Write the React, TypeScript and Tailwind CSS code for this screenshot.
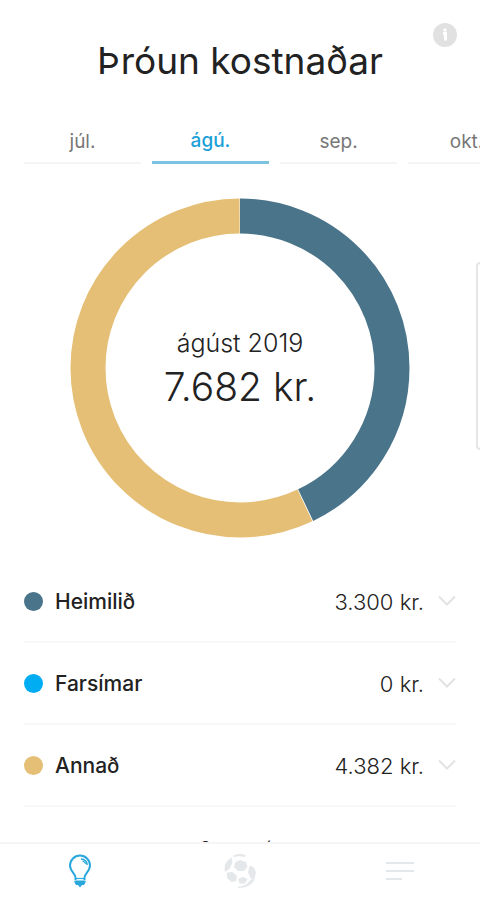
import React, { useState } from 'react';
import { clsx } from 'clsx';

interface Category {
  name: string;
  amount: number;
  dot: string;
  stroke: string;
}

const months = ['júl.', 'ágú.', 'sep.', 'okt.'];

const categories: Category[] = [
  { name: 'Heimilið', amount: 3300, dot: 'bg-[#4a748a]', stroke: '#4a748a' },
  { name: 'Farsímar', amount: 0, dot: 'bg-[#00adf2]', stroke: '#00adf2' },
  { name: 'Annað', amount: 4382, dot: 'bg-[#e5bf75]', stroke: '#e5bf75' },
];

const total = categories.reduce((sum, c) => sum + c.amount, 0);

const formatAmount = (amount: number) =>
  `${String(amount).replace(/\B(?=(\d{3})+(?!\d))/g, '.')} kr.`;

function MonthTabs() {
  const [active, setActive] = useState(1);

  return (
    <div role="tablist" className="mt-10 flex gap-[11px] overflow-hidden pl-6">
      {months.map((month, index) => (
        <button
          key={month}
          type="button"
          role="tab"
          aria-selected={index === active}
          onClick={() => setActive(index)}
          className={clsx(
            'h-[39px] w-[117px] shrink-0 pb-1 text-center text-[19px] leading-7',
            index === active
              ? 'border-b-3 border-[#7cc3e2] font-medium text-[#1ba1d8]'
              : 'border-b-2 border-[#f5f5f5] text-[#777777]'
          )}
        >
          {month}
        </button>
      ))}
    </div>
  );
}

function CostDonut() {
  const radius = 152;
  const circumference = 2 * Math.PI * radius;
  let offset = 0;

  return (
    <div className="grid place-items-center">
      <svg viewBox="0 0 340 340" className="col-start-1 row-start-1 w-[340px]" aria-hidden="true">
        <g transform="rotate(-90 170 170)" fill="none" strokeWidth="35">
          {categories.map((c) => {
            const length = (c.amount / total) * circumference;
            const start = offset;
            offset += length;
            if (length === 0) return null;
            return (
              <circle
                key={c.name}
                cx="170"
                cy="170"
                r={radius}
                stroke={c.stroke}
                strokeDasharray={`${length - 0.8} ${circumference - length + 0.8}`}
                strokeDashoffset={-start}
              />
            );
          })}
        </g>
      </svg>
      <div className="col-start-1 row-start-1 pt-1.5 text-center text-[#222222]">
        <p className="text-[25px] leading-8 font-light">ágúst 2019</p>
        <p className="text-[39px] leading-[56px] font-light">{formatAmount(total)}</p>
      </div>
    </div>
  );
}

function CategoryRow({ category }: { category: Category }) {
  return (
    <li className="border-b-2 border-[#f8f8f8]">
      <button type="button" className="flex h-20 w-full items-center text-[22px] text-[#222222]">
        <span className={clsx('size-[19px] rounded-full', category.dot)} />
        <span className="ml-3 pt-0.5 text-[21px] font-medium">{category.name}</span>
        <span className="ml-auto pt-0.5 font-light">{formatAmount(category.amount)}</span>
        <svg viewBox="0 0 18 12" className="ml-3.5 w-[18px]" fill="none" stroke="#e2e2e2" strokeWidth="2" aria-hidden="true">
          <path d="M1 1.5l8 8 8-8" />
        </svg>
      </button>
    </li>
  );
}

function BulbIcon() {
  return (
    <svg viewBox="0 0 24 34" className="h-[34px] w-6" fill="none" stroke="#2aa8dc" strokeWidth="2" aria-hidden="true">
      <path d="M7.500 26v-2.500C7.500 20 2 17 2 11.500a10 10 0 0 1 20 0c0 5.500-5.500 8.500-5.500 12V26" />
      <path d="M7.500 24.500h9" strokeWidth="1.200" />
      <path d="M6.500 26.500h11v2l-1.500 2.500h-2L12 33.500 10 31H8l-1.500-2.500z" fill="#2aa8dc" stroke="none" />
      <path d="M13 5c3.500.3 5.800 2.500 6.200 5.800" strokeWidth="1.600" />
      <path d="M14.500 7c1.600.5 2.500 1.300 3.200 2.800" strokeWidth="1.200" />
    </svg>
  );
}

function BallIcon() {
  return (
    <svg viewBox="0 0 34 36" className="h-9 w-[34px]" fill="#e5e8ea" aria-hidden="true">
      <path d="M12 9.500l5-2.500 6 2 1.500 5-3.500 4h-6l-4-4z" />
      <path d="M8.500 4.500l1 4.500-3 7L2 19C.5 13 3 7.500 8.500 4.500z" />
      <path d="M4 19.500l5.500-.5 4.500 4-1 5-4.500 1L4 25z" />
      <path d="M26.500 12.500l4 1.500 2.500 5-1.500 7h-3.500l-3-6.500z" />
      <path d="M15 26l5-2 4.500 2-2.500 4.500h-5.500z" />
      <path d="M10 3c4-2.500 9-2.500 13-.5l-1 1.500c-4-1-8-1-11 0z" />
      <path d="M32 26c-3 6-9 9-17 9v-1.500c6 0 9-2 13-7z" />
    </svg>
  );
}

function MenuIcon() {
  return (
    <svg viewBox="0 0 28 20" className="h-5 w-7" stroke="#e5e8ea" strokeWidth="2" aria-hidden="true">
      <path d="M0 2h28M0 10h28M0 18h16" />
    </svg>
  );
}

export default function App() {
  return (
    <div className="flex h-screen flex-col bg-white font-['Inter','Liberation_Sans',sans-serif]">
      <main className="min-h-0 flex-1 overflow-hidden">
        <header className="px-[23px] pt-[23px]">
          <button type="button" aria-label="Upplýsingar" className="float-right -ml-6 block">
            <svg viewBox="0 0 24 24" className="size-6" aria-hidden="true">
              <circle cx="12" cy="12" r="12" fill="#e1e1e1" />
              <path d="M12 5.500v3M10 10.500h2.500v7" stroke="#ffffff" strokeWidth="3" fill="none" />
            </svg>
          </button>
          <h1 className="pt-3.5 text-center text-[37px] leading-[48px] text-[#222222]">Þróun kostnaðar</h1>
        </header>

        <MonthTabs />

        <div className="mt-[34px] flex overflow-hidden">
          <div className="w-full shrink-0 grow">
            <CostDonut />
          </div>
          <div className="mt-16 -ml-1 h-[188px] w-24 shrink-0 rounded-[4px] border-2 border-[#e6e6e6]" />
        </div>

        <ul className="mx-6 mt-[23px]">
          {categories.map((category) => (
            <CategoryRow key={category.name} category={category} />
          ))}
        </ul>

        <h2 className="mt-7 text-center text-base text-[#222222]">Sagan mín</h2>
      </main>

      <nav className="grid h-[58px] shrink-0 grid-cols-3 border-t-2 border-[#f5f5f5] bg-white pb-0.5">
        <button type="button" aria-label="Yfirlit" className="flex items-center justify-center">
          <BulbIcon />
        </button>
        <button type="button" aria-label="Fríðindi" className="flex items-center justify-center">
          <BallIcon />
        </button>
        <button type="button" aria-label="Valmynd" className="flex items-center justify-center">
          <MenuIcon />
        </button>
      </nav>
    </div>
  );
}
